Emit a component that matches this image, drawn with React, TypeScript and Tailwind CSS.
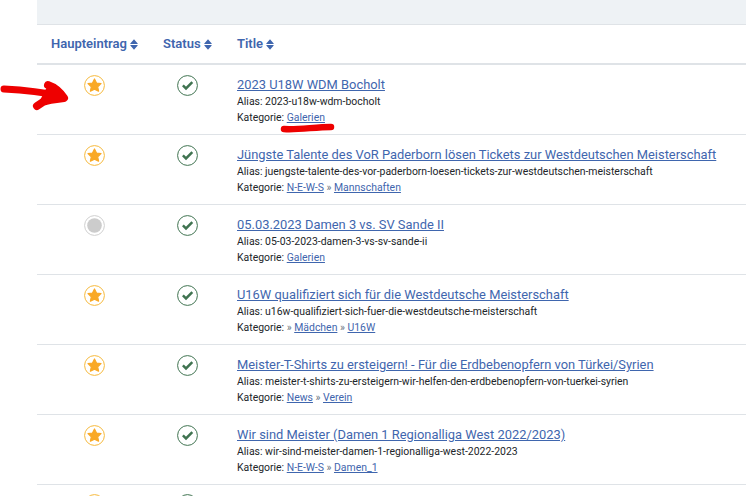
import React from "react";

const rows = [
  { title: "2023 U18W WDM Bocholt", alias: "2023-u18w-wdm-bocholt", cats: ["Galerien"], lead: "", star: true },
  { title: "Jüngste Talente des VoR Paderborn lösen Tickets zur Westdeutschen Meisterschaft", alias: "juengste-talente-des-vor-paderborn-loesen-tickets-zur-westdeutschen-meisterschaft", cats: ["N-E-W-S", "Mannschaften"], lead: "", star: true },
  { title: "05.03.2023 Damen 3 vs. SV Sande II", alias: "05-03-2023-damen-3-vs-sv-sande-ii", cats: ["Galerien"], lead: "", star: false },
  { title: "U16W qualifiziert sich für die Westdeutsche Meisterschaft", alias: "u16w-qualifiziert-sich-fuer-die-westdeutsche-meisterschaft", cats: ["Mädchen", "U16W"], lead: "» ", star: true },
  { title: "Meister-T-Shirts zu ersteigern! - Für die Erdbebenopfern von Türkei/Syrien", alias: "meister-t-shirts-zu-ersteigern-wir-helfen-den-erdbebenopfern-von-tuerkei-syrien", cats: ["News", "Verein"], lead: "", star: true },
  { title: "Wir sind Meister (Damen 1 Regionalliga West 2022/2023)", alias: "wir-sind-meister-damen-1-regionalliga-west-2022-2023", cats: ["N-E-W-S", "Damen_1"], lead: "", star: true },
];

function Sort() {
  return (
    <svg width="8" height="11" viewBox="0 0 8 11" className="ml-[3px] inline-block">
      <path d="M4 0.3 L7.7 4.4 Q7.9 4.9 7.3 4.9 L0.7 4.9 Q0.1 4.9 0.3 4.4 Z M0.7 6.1 L7.3 6.1 Q7.9 6.1 7.7 6.6 L4 10.7 L0.3 6.6 Q0.1 6.1 0.7 6.1 Z" fill="#3f66ae" />
    </svg>
  );
}

function Feature({ on }: { on: boolean }) {
  if (!on) {
    return (
      <svg width="21" height="21" viewBox="0 0 21 21">
        <circle cx="10.5" cy="10.5" r="9.9" fill="#fff" stroke="#cfcfcf" strokeWidth="1" />
        <circle cx="10.5" cy="10.5" r="7.3" fill="#cccccc" />
      </svg>
    );
  }
  return (
    <svg width="21" height="21" viewBox="0 0 21 21">
      <circle cx="10.5" cy="10.5" r="9.9" fill="#fff" stroke="#f6b93b" strokeWidth="1" />
      <path d="M10.5 4 L12.5 8 L17 8.6 L13.7 11.8 L14.6 16.2 L10.5 14.1 L6.4 16.2 L7.3 11.8 L4 8.6 L8.5 8 Z" fill="#f9a825" stroke="#f9a825" strokeWidth="1.2" strokeLinejoin="round" />
    </svg>
  );
}

function Check() {
  return (
    <svg width="21" height="21" viewBox="0 0 21 21">
      <circle cx="10.5" cy="10.5" r="9.9" fill="#fff" stroke="#3f7350" strokeWidth="1" />
      <path d="M5.9 10.4 L9 13.4 L15.3 7.2" fill="none" stroke="#3f7350" strokeWidth="2.5" />
    </svg>
  );
}

function Row({ r }: { r: (typeof rows)[number] }) {
  return (
    <div className="grid h-[70px] grid-cols-[112px_74px_1fr] border-b border-[#dfe3e7] bg-white">
      <div className="flex justify-center pl-[3px] pt-[10px]">
        <Feature on={r.star} />
      </div>
      <div className="flex justify-center pl-[3px] pt-[10px]">
        <Check />
      </div>
      <div className="pl-[14px] pt-[11px]">
        <a className="block whitespace-nowrap text-[12.9px] leading-[18px] text-[#3f66ae] underline">{r.title}</a>
        <div className="whitespace-nowrap text-[10.45px] leading-[15px] text-[#22262a]">Alias: {r.alias}</div>
        <div className="mt-[0.5px] whitespace-nowrap text-[10.45px] leading-[15px] text-[#22262a]">
          Kategorie: {r.lead && <span className="text-[#6a7480]">{r.lead}</span>}
          {r.cats.map((c, i) => (
            <span key={c}>
              {i > 0 && <span className="text-[#6a7480]"> » </span>}
              <a className="text-[#3f66ae] underline">{c}</a>
            </span>
          ))}
        </div>
      </div>
    </div>
  );
}

export default function App() {
  return (
    <div className="relative h-[496px] w-[746px] overflow-hidden bg-white font-['Roboto',sans-serif]">
      <div className="ml-[37px]">
        <div className="h-[25px] border-b border-[#dfe3e7] bg-[#eef2f5]" />
        <div className="grid h-[40px] grid-cols-[112px_74px_1fr] items-center border-b-2 border-[#dfe3e7] text-[13px] font-semibold text-[#3f66ae]">
          <div className="pl-[14px] whitespace-nowrap">Haupteintrag<Sort /></div>
          <div className="pl-[14px] whitespace-nowrap">Status<Sort /></div>
          <div className="pl-[14px] whitespace-nowrap">Title<Sort /></div>
        </div>
        {rows.map((r) => (
          <Row key={r.alias} r={r} />
        ))}
        <div className="grid grid-cols-[112px_74px_1fr]">
          <div className="flex justify-center pl-[3px] pt-[9px]">
            <Feature on />
          </div>
          <div className="flex justify-center pl-[3px] pt-[9px]">
            <Check />
          </div>
        </div>
      </div>
      <svg width="340" height="140" viewBox="0 0 340 140" className="pointer-events-none absolute left-0 top-0">
        <path d="M4 89 C22 90 42 92 62 96" fill="none" stroke="#ee0000" strokeWidth="7" strokeLinecap="round" />
        <path d="M48 85 C54 87 60 92 64 98 C55 99 47 100 43 102 L37 106" fill="#ee0000" stroke="#ee0000" strokeWidth="8" strokeLinecap="round" strokeLinejoin="round" />
        <path d="M284 129 C298 130 315 127 331 127" fill="none" stroke="#ee0000" strokeWidth="6.5" strokeLinecap="round" />
      </svg>
    </div>
  );
}
